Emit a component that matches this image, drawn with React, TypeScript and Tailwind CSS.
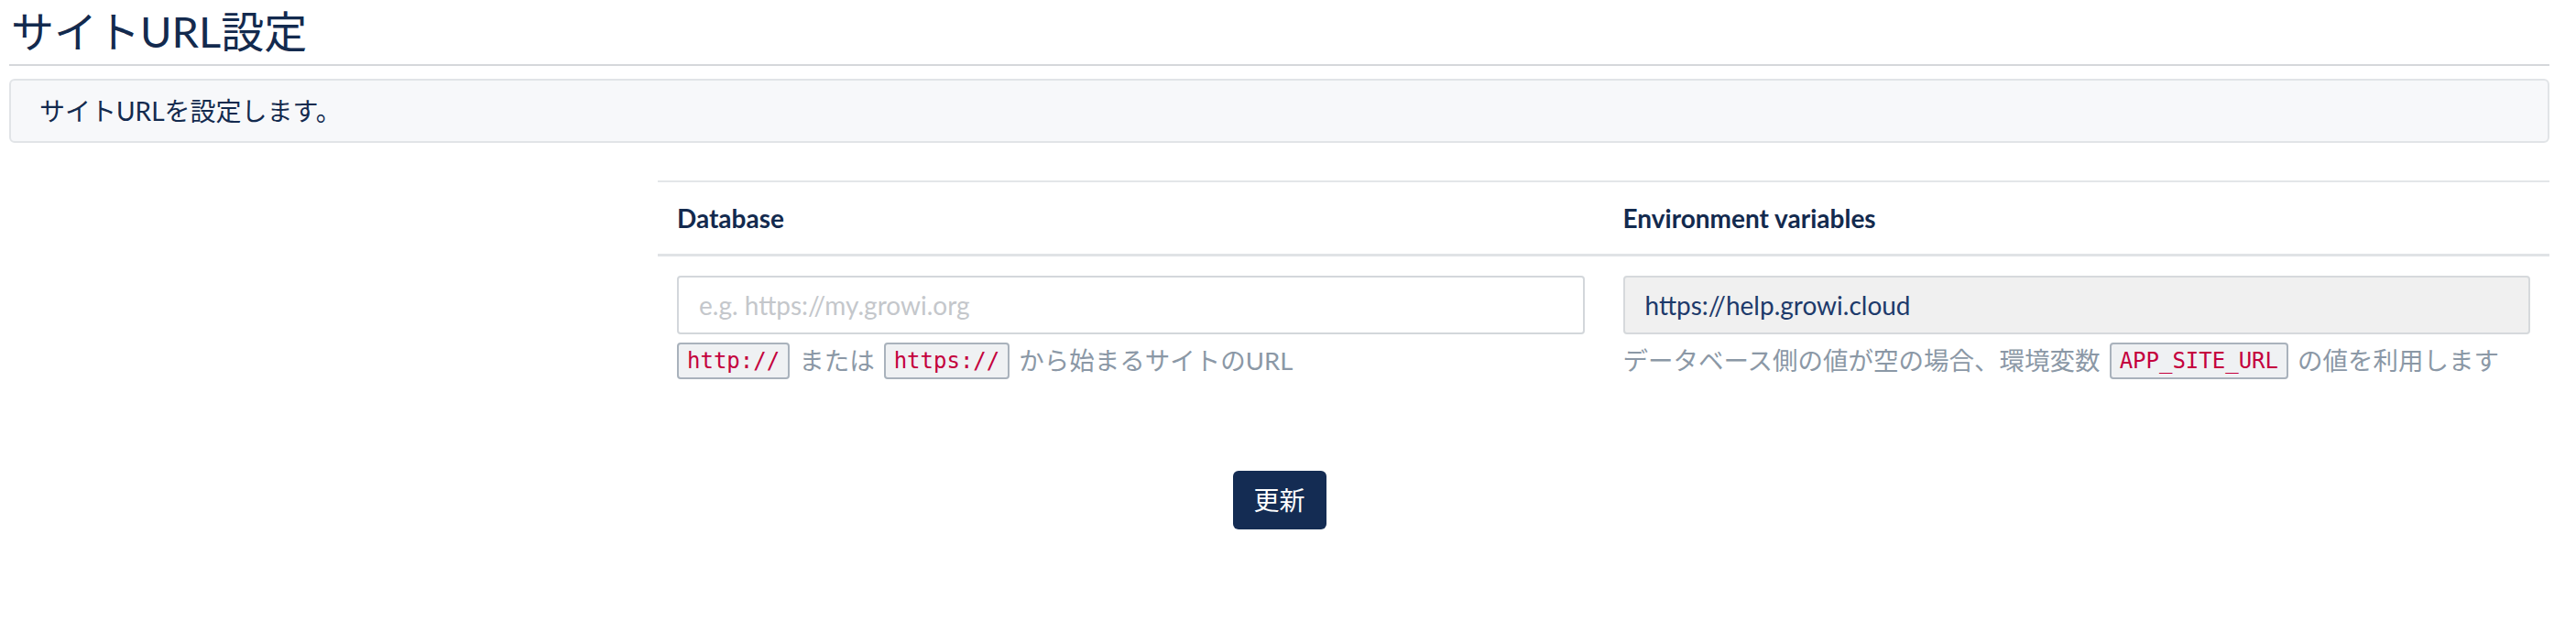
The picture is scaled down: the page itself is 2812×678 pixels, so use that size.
export default function App() {
  return (
    <div className="min-h-screen bg-white pl-[10px] pr-[29px] font-['Lato','Noto_Sans_CJK_JP',sans-serif] text-[#132a4e]">
      {/* Page title */}
      <h2 className="h-[70px] pl-[2px] text-[47px] leading-[68px]">サイトURL設定</h2>
      <div className="h-[2px] bg-[#d5d8db]"></div>

      {/* Description box */}
      <div className="mt-[14px] flex h-[70px] items-center rounded-[6px] border-2 border-[#e1e4e7] bg-[#f7f8fa] pl-[31px] text-[28px]">
        サイトURLを設定します。
      </div>

      {/* Settings table */}
      <div className="ml-[708px] mt-[41px] border-t-2 border-[#e3e6e9]">
        <div className="grid h-[81px] grid-cols-2 items-center border-b-[3px] border-[#e0e3e6] text-[28px] font-bold">
          <div className="px-[21px]">Database</div>
          <div className="px-[21px]">Environment variables</div>
        </div>
        <div className="grid grid-cols-2 py-[21px]">
          <div className="px-[21px]">
            <input
              type="text"
              placeholder="e.g. https://my.growi.org"
              className="h-[64px] w-full rounded-[4px] border-2 border-[#d3d7db] bg-white px-[22px] text-[28px] text-[#132a4e] outline-none placeholder:text-[#c4c7cb]"
            />
            <div className="mt-[8px] flex items-center gap-[10px] text-[27.5px] text-[#8b98a6]">
              <Code>http://</Code>
              <span>または</span>
              <Code>https://</Code>
              <span>から始まるサイトのURL</span>
            </div>
          </div>
          <div className="px-[21px]">
            <div className="flex h-[64px] w-full items-center rounded-[4px] border-2 border-[#d6d9dc] bg-[#f0f0f0] px-[22px] text-[28px] text-[#1d3a6b]">
              https://help.growi.cloud
            </div>
            <div className="mt-[8px] flex items-center gap-[10px] text-[27.5px] text-[#8b98a6]">
              <span>データベース側の値が空の場合、環境変数</span>
              <Code>APP_SITE_URL</Code>
              <span>の値を利用します</span>
            </div>
          </div>
        </div>
      </div>

      {/* Submit */}
      <div className="mt-[79px] flex justify-center">
        <button className="flex h-[64px] w-[102px] items-center justify-center rounded-[6px] bg-[#142c53] text-[28px] text-white">
          更新
        </button>
      </div>
    </div>
  )
}

function Code({ children }: { children: React.ReactNode }) {
  return (
    <code className="inline-flex h-[40px] items-center rounded-[4px] border-2 border-[#a9b2bc] bg-[#eff1f3] px-[9px] font-['DejaVu_Sans_Mono',monospace] text-[24px] text-[#c4003d]">
      {children}
    </code>
  )
}
